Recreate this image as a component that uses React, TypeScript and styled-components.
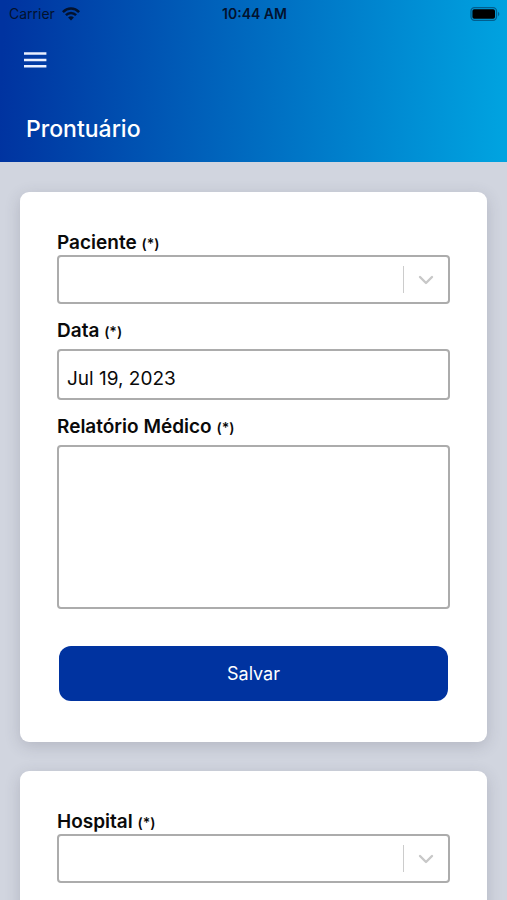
import React, { useId, useState } from "react";
import styled, { createGlobalStyle } from "styled-components";

const GlobalStyle = createGlobalStyle`
  *, *::before, *::after { box-sizing: border-box; }
  body {
    margin: 0;
    background: #d1d5df;
    color: #0a0a0a;
    font-family: Inter, "Liberation Sans", sans-serif;
  }
  button, input, select, textarea { font: inherit; color: inherit; }
`;

const Screen = styled.div`
  display: flex;
  flex-direction: column;
  height: 100vh;
`;

const Header = styled.header`
  flex: none;
  display: flex;
  flex-direction: column;
  padding-bottom: 17px;
  background: linear-gradient(93deg, #0033a0 1%, #00a3e0 99%);
`;

const StatusBar = styled.div`
  display: grid;
  grid-template-columns: 1fr auto 1fr;
  align-items: center;
  height: 28px;
  padding: 0 7px 0 9px;
  color: #03122e;
  font-size: 14px;
  line-height: 16px;
`;

const Carrier = styled.span`
  display: flex;
  align-items: center;
  gap: 7px;
`;

const Clock = styled.time`
  font-weight: 600;
`;

const BatteryIcon = styled.svg`
  justify-self: end;
`;

const MenuButton = styled.button`
  display: flex;
  align-items: center;
  justify-content: center;
  width: 32px;
  height: 32px;
  margin: 16px 0 0 19px;
  padding: 0;
  border: 0;
  background: none;
  cursor: pointer;
`;

const Title = styled.h1`
  margin: 37px 26px 0;
  color: #fff;
  font-size: 23px;
  font-weight: 500;
  line-height: 32px;
`;

const Content = styled.main`
  flex: 1;
  min-height: 0;
  display: flex;
  flex-direction: column;
  gap: 29px;
  padding: 30px 20px;
  overflow-y: auto;
  scrollbar-width: none;
`;

const Card = styled.form`
  flex: none;
  display: flex;
  flex-direction: column;
  gap: 15px;
  padding: 39px 37px 41px;
  border-radius: 9px;
  background: #fff;
  box-shadow: 0 4px 16px rgba(60, 60, 80, 0.2);
`;

const Field = styled.div<{ $gap: number }>`
  display: flex;
  flex-direction: column;
  gap: ${({ $gap }) => $gap}px;
`;

const Label = styled.label`
  font-size: 19px;
  font-weight: 600;
  line-height: 24px;
`;

const Required = styled.span`
  font-size: 14px;
  line-height: 14px;
`;

const SelectBox = styled.div`
  position: relative;
  display: flex;
`;

const Select = styled.select`
  flex: 1;
  min-width: 0;
  height: 49px;
  padding: 0 56px 0 8px;
  border: 2px solid #acacac;
  border-radius: 4px;
  background: #fff;
  font-size: 19px;
  appearance: none;
`;

const Indicator = styled.div`
  position: absolute;
  inset: 11px 15px 11px auto;
  display: flex;
  align-items: center;
  padding-left: 13px;
  border-left: 1px solid #cccccc;
  pointer-events: none;
`;

const TextInput = styled.input`
  width: 100%;
  height: 51px;
  padding: 8px 8px 0;
  border: 2px solid #acacac;
  border-radius: 4px;
  background: #fff;
  font-size: 19px;
`;

const TextArea = styled.textarea`
  display: block;
  width: 100%;
  height: 164px;
  padding: 8px;
  border: 2px solid #acacac;
  border-radius: 4px;
  background: #fff;
  font-size: 19px;
  resize: none;
`;

const SaveButton = styled.button`
  height: 55px;
  margin: 22px 2px 0;
  border: 0;
  border-radius: 12px;
  background: #0033a0;
  color: #fff;
  font-size: 18px;
  cursor: pointer;
`;

function WifiIcon() {
  return (
    <svg width="18" height="14" viewBox="0 0 18 14" fill="none" stroke="#03122e" strokeWidth="2.5" aria-hidden="true">
      <path d="M0.9 5.1C5.5 0.4 12.5 0.4 17.1 5.1" />
      <path d="M3.9 8.2C6.8 5.3 11.2 5.3 14.1 8.2" />
      <path d="M6.1 10.5C7.8 8.9 10.2 8.9 11.9 10.5L9 13.5Z" fill="#03122e" stroke="none" />
    </svg>
  );
}

function LabelText({ id, children }: { id: string; children: React.ReactNode }) {
  return (
    <Label htmlFor={id}>
      {children} <Required>(*)</Required>
    </Label>
  );
}

function SelectField({ label }: { label: string }) {
  const id = useId();
  return (
    <Field $gap={0}>
      <LabelText id={id}>{label}</LabelText>
      <SelectBox>
        <Select id={id} required defaultValue="">
          <option value="" />
        </Select>
        <Indicator>
          <svg width="18" height="12" viewBox="0 0 18 12" fill="none" stroke="#c8c8c8" strokeWidth="2.4" strokeLinecap="round" strokeLinejoin="round" aria-hidden="true">
            <path d="M3 3L9 9L15 3" />
          </svg>
        </Indicator>
      </SelectBox>
    </Field>
  );
}

export default function App() {
  const dateId = useId();
  const reportId = useId();
  const [date, setDate] = useState("Jul 19, 2023");
  const [report, setReport] = useState("");

  return (
    <Screen>
      <GlobalStyle />
      <Header>
        <StatusBar>
          <Carrier>
            Carrier
            <WifiIcon />
          </Carrier>
          <Clock>10:44 AM</Clock>
          <BatteryIcon width="30" height="14" viewBox="0 0 30 14" aria-hidden="true">
            <rect x="1" y="0.7" width="25.5" height="12.6" rx="3.5" fill="none" stroke="#03122e" strokeOpacity="0.45" strokeWidth="1.3" />
            <rect x="2.4" y="2.2" width="22.6" height="9.6" rx="1.8" fill="#000" />
            <path d="M28 4.8C29.8 5.6 29.8 8.4 28 9.2Z" fill="#03122e" fillOpacity="0.45" />
          </BatteryIcon>
        </StatusBar>
        <MenuButton type="button" aria-label="Menu">
          <svg width="24" height="18" viewBox="0 0 24 18" stroke="#e9f0ff" strokeWidth="2.6" aria-hidden="true">
            <path d="M1 2.5H23.4M1 9H23.4M1 15.3H23.4" />
          </svg>
        </MenuButton>
        <Title>Prontuário</Title>
      </Header>
      <Content>
        <Card onSubmit={(event) => event.preventDefault()}>
          <SelectField label="Paciente" />
          <Field $gap={6}>
            <LabelText id={dateId}>Data</LabelText>
            <TextInput id={dateId} value={date} onChange={(event) => setDate(event.target.value)} />
          </Field>
          <Field $gap={6}>
            <LabelText id={reportId}>Relatório Médico</LabelText>
            <TextArea id={reportId} value={report} onChange={(event) => setReport(event.target.value)} />
          </Field>
          <SaveButton type="submit">Salvar</SaveButton>
        </Card>
        <Card onSubmit={(event) => event.preventDefault()}>
          <SelectField label="Hospital" />
        </Card>
      </Content>
    </Screen>
  );
}
